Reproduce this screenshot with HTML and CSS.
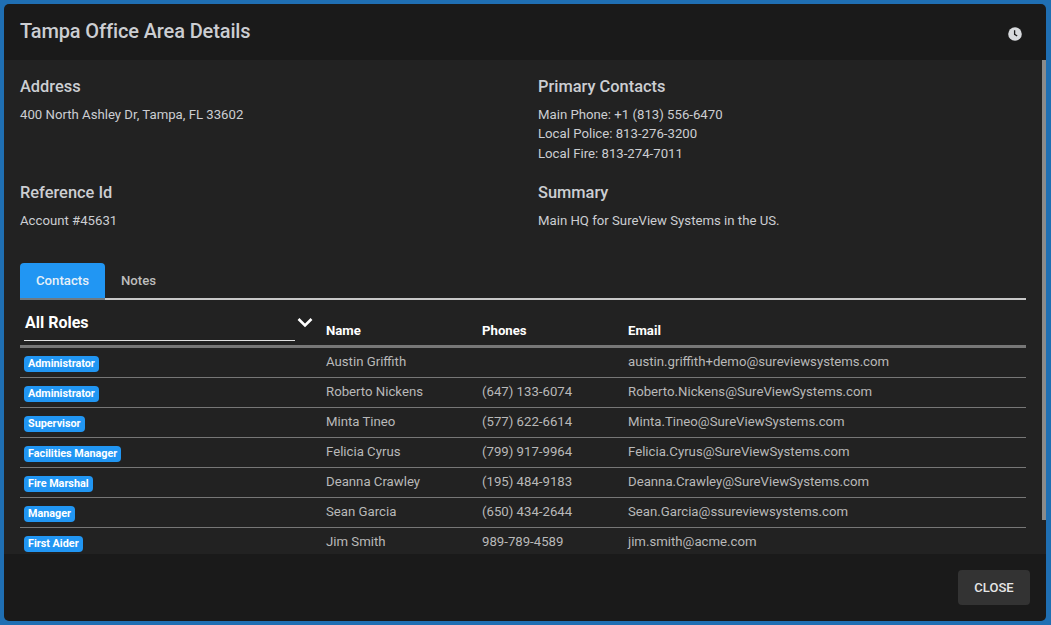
FILE: index.html
```html
<!DOCTYPE html>
<html>
<head>
<meta charset="UTF-8">
<title>Tampa Office Area Details</title>
<link rel="stylesheet" href="styles.css">
</head>
<body>
<div class="dialog">
	<div class="dialog-head">
		<h1>Tampa Office Area Details</h1>
		<svg class="clock" width="14" height="14" viewBox="0 0 14 14"><circle cx="7" cy="7" r="6.8" fill="#d8dadd"/><path d="M6.6 3.2v4.1l2.6 1.7" fill="none" stroke="#1a1a1a" stroke-width="1.3"/></svg>
	</div>
	<div class="dialog-body">
		<div class="info">
			<div class="info-block">
				<h2>Address</h2>
				<p>400 North Ashley Dr, Tampa, FL 33602</p>
			</div>
			<div class="info-block">
				<h2>Primary Contacts</h2>
				<p>Main Phone: +1 (813) 556-6470</p>
				<p>Local Police: 813-276-3200</p>
				<p>Local Fire: 813-274-7011</p>
			</div>
			<div class="info-block">
				<h2>Reference Id</h2>
				<p>Account #45631</p>
			</div>
			<div class="info-block">
				<h2>Summary</h2>
				<p>Main HQ for SureView Systems in the US.</p>
			</div>
		</div>
		<div class="tabs">
			<div class="tab active">Contacts</div>
			<div class="tab">Notes</div>
		</div>
		<table class="contacts">
			<thead>
				<tr>
					<th class="role-col">
						<div class="role-select">
							<span>All Roles</span>
							<svg width="16" height="11" viewBox="0 0 16 11"><path d="M1.5 2l6.5 6.5 6.5-6.5" fill="none" stroke="#fff" stroke-width="2.6"/></svg>
						</div>
					</th>
					<th class="name-col">Name</th>
					<th class="phone-col">Phones</th>
					<th>Email</th>
				</tr>
			</thead>
			<tbody>
				<tr><td><span class="badge">Administrator</span></td><td>Austin Griffith</td><td></td><td>austin.griffith+demo@sureviewsystems.com</td></tr>
				<tr><td><span class="badge">Administrator</span></td><td>Roberto Nickens</td><td>(647) 133-6074</td><td>Roberto.Nickens@SureViewSystems.com</td></tr>
				<tr><td><span class="badge">Supervisor</span></td><td>Minta Tineo</td><td>(577) 622-6614</td><td>Minta.Tineo@SureViewSystems.com</td></tr>
				<tr><td><span class="badge">Facilities Manager</span></td><td>Felicia Cyrus</td><td>(799) 917-9964</td><td>Felicia.Cyrus@SureViewSystems.com</td></tr>
				<tr><td><span class="badge">Fire Marshal</span></td><td>Deanna Crawley</td><td>(195) 484-9183</td><td>Deanna.Crawley@SureViewSystems.com</td></tr>
				<tr><td><span class="badge">Manager</span></td><td>Sean Garcia</td><td>(650) 434-2644</td><td>Sean.Garcia@ssureviewsystems.com</td></tr>
				<tr><td><span class="badge">First Aider</span></td><td>Jim Smith</td><td>989-789-4589</td><td>jim.smith@acme.com</td></tr>
			</tbody>
		</table>
		<div class="scrollbar"></div>
	</div>
	<div class="dialog-foot">
		<button type="button" class="close-btn">CLOSE</button>
	</div>
</div>
</body>
</html>
```
FILE: styles.css
```css
html, body{
	margin: 0;
	height: 100%;
	overflow: hidden;
}
body{
	background: #1f6fb3;
	font-family: Roboto, "Liberation Sans", sans-serif;
	padding: 4px 5px 4px 4px;
	box-sizing: border-box;
}

.dialog{
	height: 100%;
	display: flex;
	flex-direction: column;
	background: #1a1a1a;
	border-radius: 5px;
	overflow: hidden;
}

.dialog-head{
	height: 56px;
	flex: none;
	display: flex;
	align-items: center;
	justify-content: space-between;
	padding: 0 24px 0 16px;
}
.dialog-head h1{
	margin: 0 0 2px;
	font-size: 20px;
	font-weight: 500;
	letter-spacing: -0.12px;
	color: #ccced2;
}
.clock{
	margin-top: 3px;
}

.dialog-body{
	position: relative;
	flex: 1;
	min-height: 0;
	overflow: hidden;
	background: #222222;
	padding: 17px 20px 0 16px;
}
.scrollbar{
	position: absolute;
	top: 0;
	right: 0;
	width: 4px;
	height: 460px;
	background: #8a8a8a;
}

.info{
	display: grid;
	grid-template-columns: 518px 1fr;
	grid-template-rows: 106px 70px;
	color: #ccced2;
}
.info-block h2{
	margin: 0 0 7.8px;
	font-size: 16.4px;
	line-height: 20px;
	font-weight: 500;
}
.info-block p{
	margin: 0;
	font-size: 13.2px;
	line-height: 19.5px;
}

.tabs{
	display: flex;
	border-bottom: 2px solid #c8c8c8;
	height: 35px;
	margin-top: 10px;
}
.tab{
	padding: 0 16px;
	font-size: 13.2px;
	line-height: 35px;
	font-weight: 500;
	color: #bdbdbd;
}
.tab.active{
	width: 53px;
	background: #2196f3;
	color: #e6f0f8;
	border-radius: 4px 4px 0 0;
	border-bottom: 2px solid #6f7a82;
	margin-bottom: -2px;
}

.contacts{
	width: 1006px;
	table-layout: fixed;
	border-collapse: collapse;
}
.contacts th{
	height: 38px;
	padding: 0 4px 7px 0;
	vertical-align: bottom;
	text-align: left;
	font-size: 13.2px;
	line-height: 15px;
	font-weight: 700;
	color: #fff;
	border-bottom: 3px solid #777;
}
.contacts th.role-col{
	width: 306px;
	padding: 0 0 4px 0;
}
.contacts th.name-col{
	width: 152px;
}
.contacts th.phone-col{
	width: 142px;
}
.contacts td{
	height: 27px;
	padding: 0 4px 2px 0;
	font-size: 13.2px;
	color: #b9b9b9;
	border-bottom: 1px solid #777;
}
.contacts td:first-child{
	padding-left: 4px;
}

.role-select{
	display: flex;
	align-items: center;
	justify-content: space-between;
	box-sizing: border-box;
	height: 37px;
	margin-left: 4px;
	padding-left: 1px;
	position: relative;
	font-size: 16px;
	font-weight: 700;
	color: #fff;
}
.role-select::after{
	content: "";
	position: absolute;
	left: 0;
	bottom: 0;
	width: 271px;
	border-bottom: 1px solid #e0e0e0;
}
.role-select svg{
	margin: 0 13px 0 0;
}

.badge{
	display: inline-block;
	background: #2196f3;
	color: #fff;
	font-size: 10.8px;
	font-weight: 700;
	line-height: 16px;
	padding: 0 4px;
	border-radius: 4px;
	position: relative;
	top: 2px;
}

.dialog-foot{
	height: 67px;
	flex: none;
	display: flex;
	align-items: center;
	justify-content: flex-end;
	padding-right: 16px;
}
.close-btn{
	width: 72px;
	height: 35px;
	border: 0;
	border-radius: 4px;
	background: #333333;
	color: #e6e6e6;
	font-family: Roboto, "Liberation Sans", sans-serif;
	font-size: 13px;
	font-weight: 500;
}
```
